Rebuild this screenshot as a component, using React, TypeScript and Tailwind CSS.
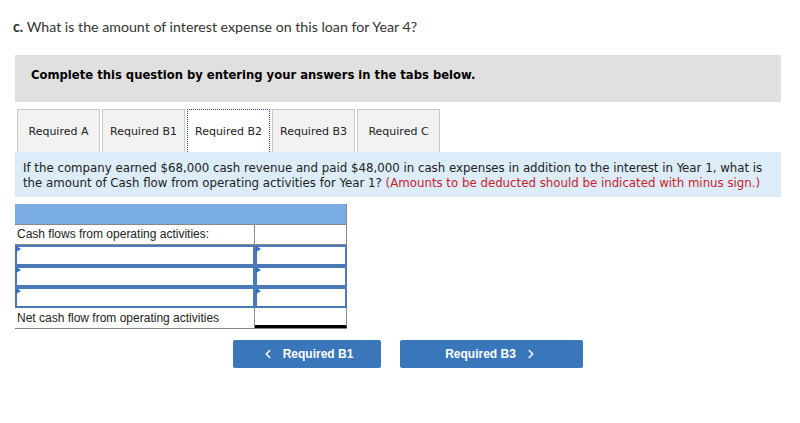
import { ChevronLeft, ChevronRight } from "lucide-react";

const tabs = ["Required A", "Required B1", "Required B2", "Required B3", "Required C"];

const InputRow = () => (
  <div className="flex h-[21px]">
    <div className="relative w-[240px] border-2 border-[#4a7ab8]">
      <span className="absolute left-[-1px] top-[-1px] h-0 w-0 border-y-[3px] border-l-[5px] border-y-transparent border-l-[#2f6fc0]" />
    </div>
    <div className="relative w-[92px] border-2 border-[#4a7ab8]">
      <span className="absolute left-[-1px] top-[-1px] h-0 w-0 border-y-[3px] border-l-[5px] border-y-transparent border-l-[#2f6fc0]" />
    </div>
  </div>
);

export default function App() {
  return (
    <div className="h-[423px] w-[800px] bg-white text-[#333]">
      <p className="pl-[13px] pt-[17px] font-['Lato',sans-serif] text-[14.2px] leading-[20px] text-[#333]">
        <b className="font-bold">c.</b> What is the amount of interest expense on this loan for Year 4?
      </p>

      <div className="ml-[15px] mt-[18px] h-[47px] w-[766px] bg-[#e0e0e0] pl-[16px] pt-[12px] font-['DejaVu_Sans',sans-serif] text-[11.6px] font-bold text-black">
        Complete this question by entering your answers in the tabs below.
      </div>

      <div className="ml-[17px] mt-[7px] flex gap-[2px]">
        {tabs.map((t) =>
          t === "Required B2" ? (
            <div
              key={t}
              className="flex h-[43px] w-[83px] items-center justify-center border border-b-0 border-dotted border-[#2b4f8a] bg-white pt-[2px] font-['DejaVu_Sans',sans-serif] text-[11px] text-[#222]"
            >
              {t}
            </div>
          ) : (
            <div
              key={t}
              className="flex h-[43px] w-[83px] items-center justify-center border border-b-0 border-[#c9c9c9] bg-[#f2f2f2] pt-[2px] font-['DejaVu_Sans',sans-serif] text-[11px] text-[#222]"
            >
              {t}
            </div>
          )
        )}
      </div>

      <div className="ml-[15px] h-[45px] w-[766px] bg-[#dcecf9] px-[8px] pt-[8px] font-['DejaVu_Sans_Condensed',sans-serif] text-[13.1px] leading-[15px] text-[#222]">
        If the company earned $68,000 cash revenue and paid $48,000 in cash expenses in addition to the interest in Year 1, what is the amount of Cash flow from operating activities for Year 1?{" "}
        <span className="text-[#c8232c]">(Amounts to be deducted should be indicated with minus sign.)</span>
      </div>

      <div className="ml-[15px] mt-[7px] w-[332px] font-['Liberation_Sans',sans-serif] text-[12px] text-[#222]">
        <div className="h-[20px] border-r border-[#888] bg-[#7aace4]" />
        <div className="flex h-[21px] border-y border-[#888]">
          <div className="w-[240px] border-r border-[#888] pl-[2px] leading-[19px]">Cash flows from operating activities:</div>
          <div className="w-[92px] border-r border-[#888]" />
        </div>
        <InputRow />
        <InputRow />
        <InputRow />
        <div className="flex h-[21px] border-b border-[#888]">
          <div className="w-[240px] border-r border-[#888] pl-[2px] leading-[20px]">Net cash flow from operating activities</div>
          <div className="w-[92px] border-b-[3px] border-r border-b-black border-r-[#888]" />
        </div>
      </div>

      <div className="ml-[233px] mt-[11px] flex gap-[19px] font-['Liberation_Sans',sans-serif] text-[12px] font-bold text-white">
        <button className="flex h-[28px] w-[148px] items-center justify-center gap-[8px] rounded-[2px] bg-[#3a76ba]">
          <ChevronLeft size={14} strokeWidth={2.5} />
          Required B1
        </button>
        <button className="flex h-[28px] w-[183px] items-center justify-center gap-[8px] rounded-[2px] bg-[#3a76ba]">
          Required B3
          <ChevronRight size={14} strokeWidth={2.5} />
        </button>
      </div>
    </div>
  );
}
